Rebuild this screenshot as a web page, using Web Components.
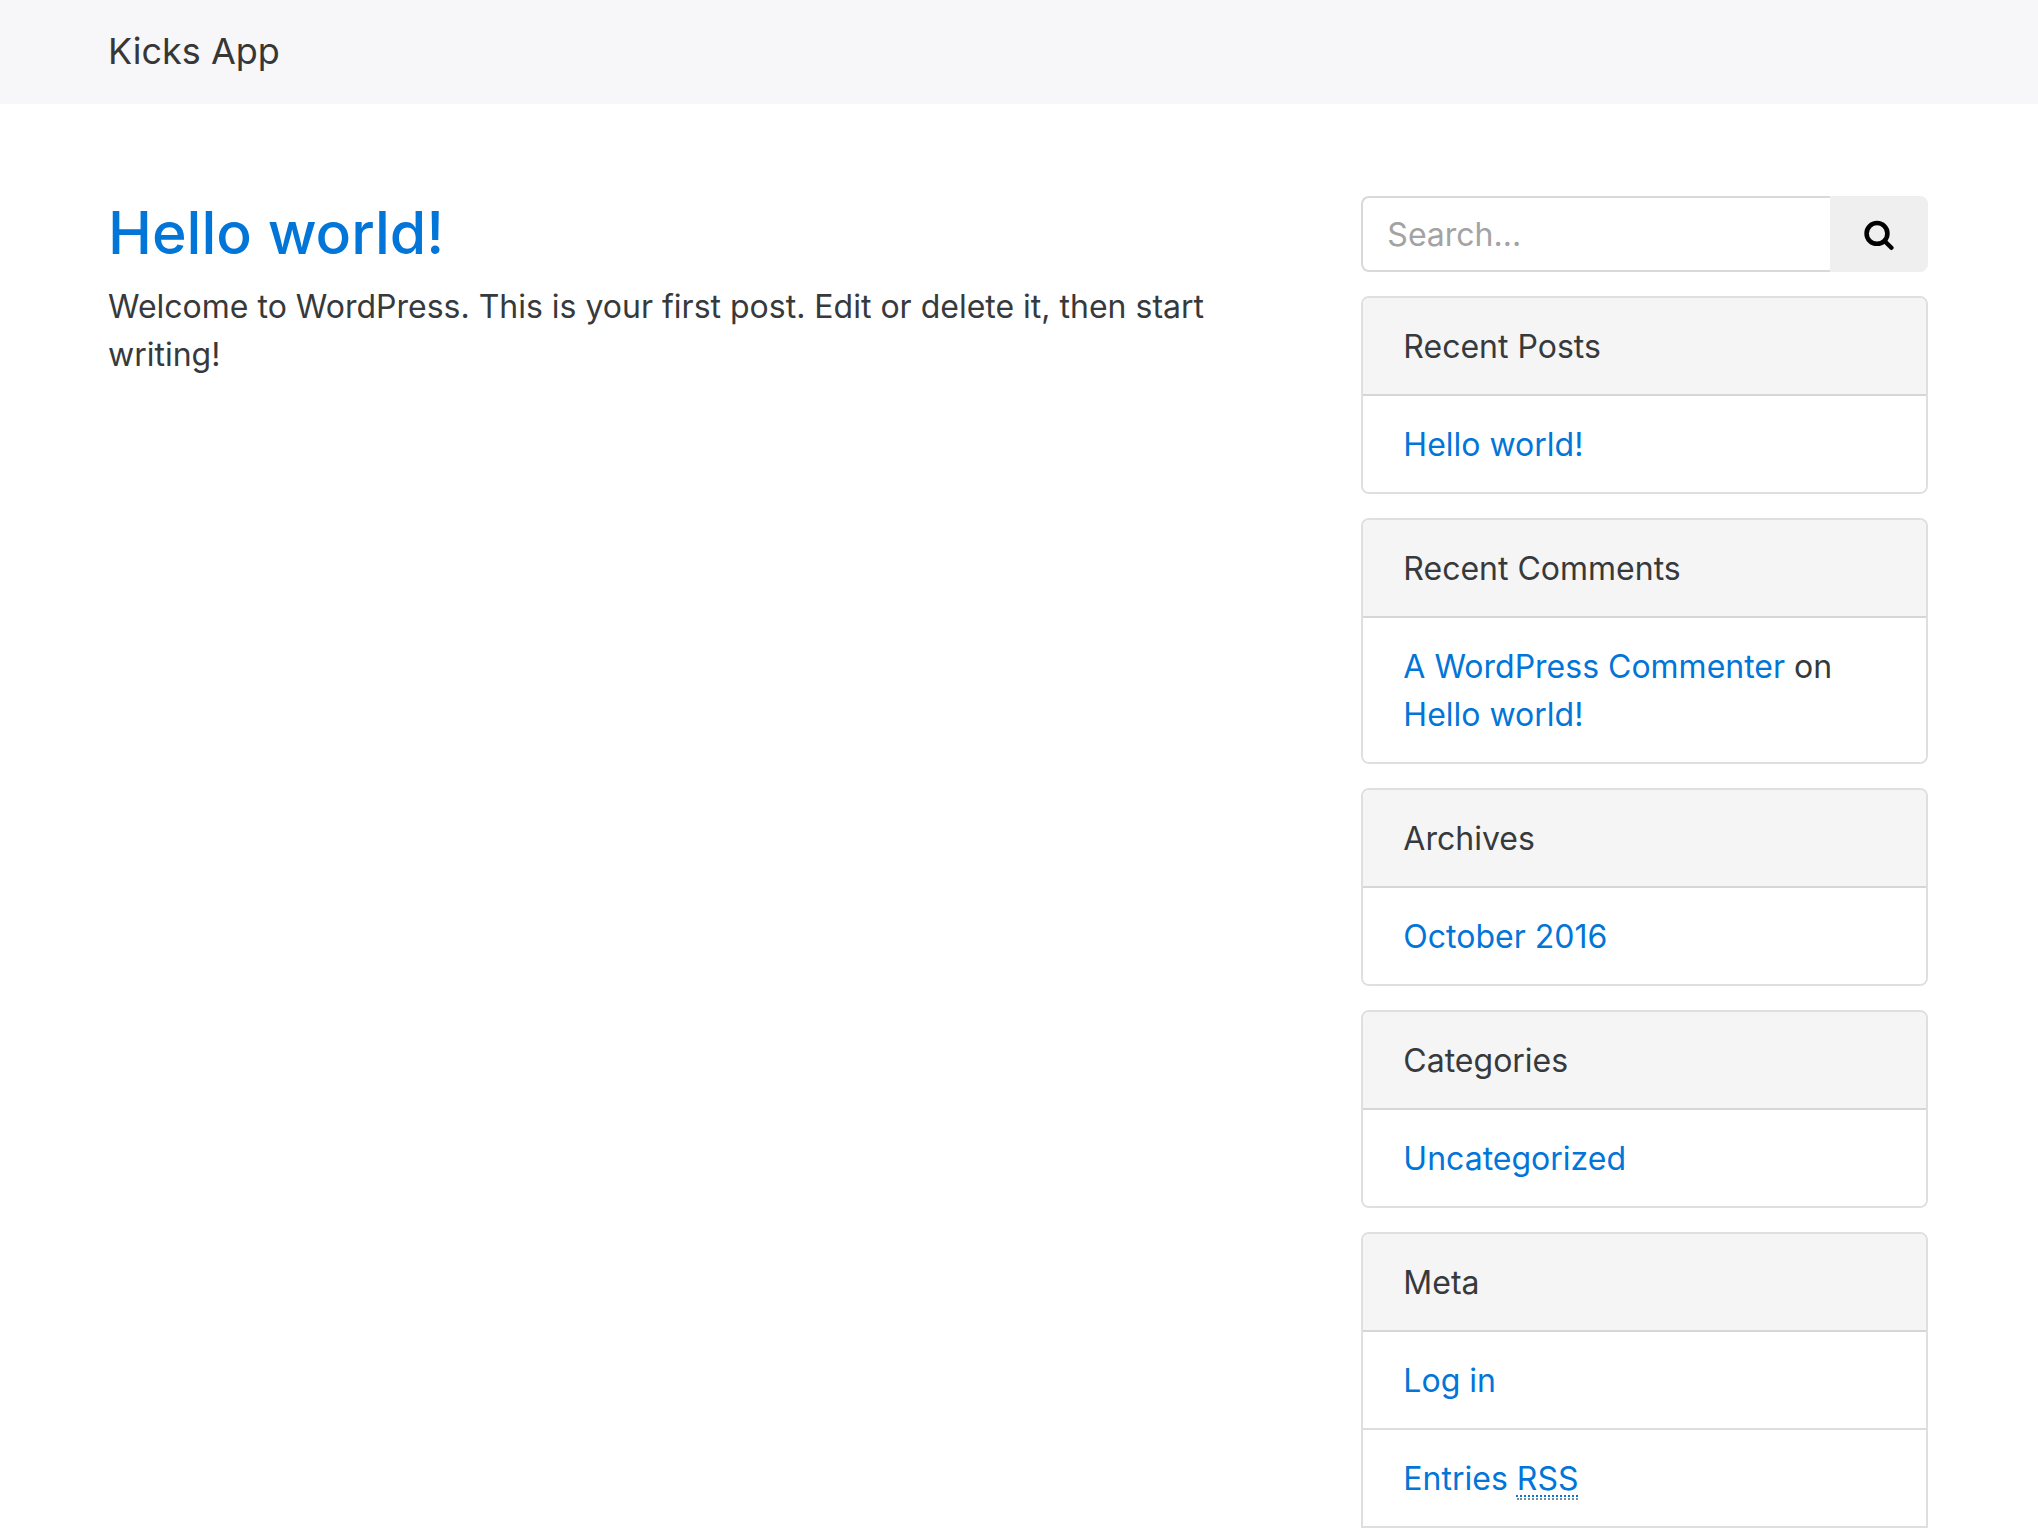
<!DOCTYPE html>
<html lang="en">
<head>
<meta charset="utf-8">
<title>Kicks App</title>
<style>
  body {
    margin: 0;
    background: #fff;
    color: #373a3c;
    font: 400 32px/48px Inter, "Liberation Sans", sans-serif;
  }
</style>
</head>
<body>
<kicks-page>
  <kicks-navbar slot="top" brand="Kicks App"></kicks-navbar>
  <kicks-post heading="Hello world!">Welcome to WordPress. This is your first post. Edit or delete it, then start writing!</kicks-post>
  <kicks-search slot="side"></kicks-search>
  <kicks-card slot="side" heading="Recent Posts">
    <kicks-item><kicks-link>Hello world!</kicks-link></kicks-item>
  </kicks-card>
  <kicks-card slot="side" heading="Recent Comments">
    <kicks-item><kicks-link>A WordPress Commenter</kicks-link> on <kicks-link>Hello world!</kicks-link></kicks-item>
  </kicks-card>
  <kicks-card slot="side" heading="Archives">
    <kicks-item><kicks-link>October 2016</kicks-link></kicks-item>
  </kicks-card>
  <kicks-card slot="side" heading="Categories">
    <kicks-item><kicks-link>Uncategorized</kicks-link></kicks-item>
  </kicks-card>
  <kicks-card slot="side" heading="Meta" continued>
    <kicks-item><kicks-link>Log in</kicks-link></kicks-item>
    <kicks-item><kicks-link>Entries <kicks-abbr full="Really Simple Syndication">RSS</kicks-abbr></kicks-link></kicks-item>
  </kicks-card>
</kicks-page>

<script>
  const define = (name, markup, setup) => {
    const template = document.createElement('template');
    template.innerHTML = markup;
    customElements.define(name, class extends HTMLElement {
      constructor() {
        super();
        this.attachShadow({ mode: 'open' }).append(template.content.cloneNode(true));
      }
      connectedCallback() {
        if (setup) setup(this, this.shadowRoot);
      }
    });
  };

  define('kicks-page', `
    <style>
      :host { display: block; }
      .container {
        display: flex;
        align-items: flex-start;
        gap: 60px;
        padding: 92px 110px 0 108px;
      }
      main { flex: 1; min-width: 0; }
      aside {
        flex: 0 0 calc((100% - 120px) / 3);
        min-width: 0;
        display: flex;
        flex-direction: column;
        gap: 24px;
      }
    </style>
    <slot name="top"></slot>
    <div class="container">
      <main><slot></slot></main>
      <aside><slot name="side"></slot></aside>
    </div>`);

  define('kicks-navbar', `
    <style>
      :host { display: block; background: #f7f7f9; }
      nav { display: flex; padding: 21px 108px 23px; }
      a { color: #373737; font-size: 36px; line-height: 60px; text-decoration: none; }
    </style>
    <nav><a href="#"></a></nav>`,
    (host, root) => { root.querySelector('a').textContent = host.getAttribute('brand'); });

  define('kicks-post', `
    <style>
      :host { display: block; }
      h2 { margin: 0; padding: 2px 0 15px; font-size: 59px; font-weight: 500; line-height: 70px; }
      a { color: #0275d8; text-decoration: none; }
      p { margin: 0; }
    </style>
    <article>
      <h2><a href="#"></a></h2>
      <p><slot></slot></p>
    </article>`,
    (host, root) => { root.querySelector('a').textContent = host.getAttribute('heading'); });

  define('kicks-search', `
    <style>
      :host { display: block; }
      form { display: flex; margin: 0; }
      input {
        flex: 1;
        width: 100%;
        min-width: 0;
        box-sizing: border-box;
        height: 76px;
        margin: 0;
        padding: 12px 24px;
        border: 2px solid #d9d9d9;
        border-right: 0;
        border-radius: 8px 0 0 8px;
        background: #fff;
        color: #55595c;
        font: inherit;
        outline: 0;
      }
      input::placeholder { color: #a3a3a3; opacity: 1; }
      button {
        display: flex;
        align-items: center;
        justify-content: center;
        flex: none;
        width: 98px;
        padding: 0;
        border: 0;
        border-radius: 0 8px 8px 0;
        background: #efefef;
        color: #000;
      }
      svg { display: block; }
    </style>
    <form role="search">
      <input type="search" placeholder="Search..." aria-label="Search">
      <button type="button" aria-label="Submit search">
        <svg width="30" height="34" viewBox="0 0 30 34" fill="none" stroke="currentColor" aria-hidden="true">
          <circle cx="13" cy="16.4" r="10.4" stroke-width="4.6"/>
          <path d="M20.8 24.2 L27.4 30.8" stroke-width="4.4" stroke-linecap="round"/>
        </svg>
      </button>
    </form>`);

  define('kicks-card', `
    <style>
      :host {
        display: block;
        overflow: hidden;
        border: 2px solid #dfdfdf;
        border-radius: 8px;
        background: #fff;
      }
      :host([continued]) { border-radius: 8px 8px 0 0; }
      h3 {
        margin: 0;
        padding: 25px 40px 23px;
        border-bottom: 2px solid #d6d6d6;
        background: #f5f5f5;
        font: inherit;
      }
      div { display: flex; flex-direction: column; gap: 2px; background: #ddd; }
    </style>
    <section>
      <h3></h3>
      <div role="list"><slot></slot></div>
    </section>`,
    (host, root) => { root.querySelector('h3').textContent = host.getAttribute('heading'); });

  define('kicks-item', `
    <style>
      :host { display: block; padding: 25px 40px 23px; background: #fff; }
    </style>
    <slot></slot>`,
    host => host.setAttribute('role', 'listitem'));

  define('kicks-link', `
    <style>
      :host { display: inline; }
      a { color: #0275d8; text-decoration: none; }
    </style>
    <a href="#"><slot></slot></a>`);

  define('kicks-abbr', `
    <style>
      :host { display: inline; }
      abbr {
        border-bottom: 2px dotted #818a91;
        text-decoration: underline dotted 2px;
        text-underline-offset: 5px;
      }
    </style>
    <abbr><slot></slot></abbr>`,
    (host, root) => { root.querySelector('abbr').title = host.getAttribute('full'); });
</script>
</body>
</html>
